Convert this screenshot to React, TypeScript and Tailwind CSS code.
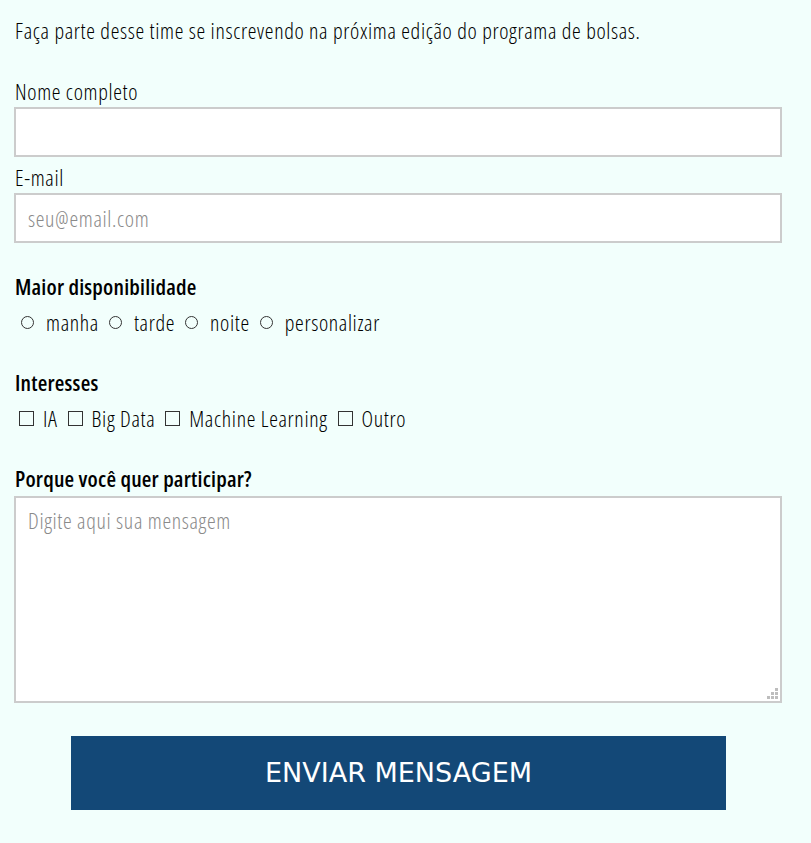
import React from "react";

const radios = ["manha", "tarde", "noite", "personalizar"];
const checks = ["IA", "Big Data", "Machine Learning", "Outro"];

export default function App() {
  return (
    <div
      className="min-h-[843px] w-full bg-[#f2fffc] px-[14px] pt-[14px] text-[22px] tracking-[0.65px] text-black font-light font-stretch-condensed"
      style={{ fontFamily: "'Open Sans', 'DejaVu Sans Condensed', sans-serif" }}
    >
      <p className="leading-[32px] pl-[1px]">
        Faça parte desse time se inscrevendo na próxima edição do programa de bolsas.
      </p>

      <form className="mt-[29px]" onSubmit={(e) => e.preventDefault()}>
        <label className="block leading-[32px] pl-[1px]">Nome completo</label>
        <input className="block h-[50px] w-[768px] border-2 border-[#cccccc] bg-white px-3 outline-none" />

        <label className="block mt-[4px] leading-[32px] pl-[1px]">E-mail</label>
        <input
          className="block h-[50px] w-[768px] border-2 border-[#cccccc] bg-white px-3 outline-none placeholder:text-[#8a8a8a]"
          placeholder="seu@email.com"
        />

        <div className="mt-[27px] font-semibold tracking-[0.2px] leading-[32px] pl-[1px]">Maior disponibilidade</div>
        <div className="flex items-center leading-[40px] pl-[7px]">
          {radios.map((r) => (
            <span key={r} className="mr-[10px] flex items-center">
              <span className="mr-[12px] inline-block h-[13px] w-[13px] shrink-0 rounded-full border border-[#333]" />
              {r}
            </span>
          ))}
        </div>

        <div className="mt-[24px] font-semibold tracking-[0.2px] leading-[32px] pl-[1px]">Interesses</div>
        <div className="flex items-center leading-[40px] pl-[5px]">
          {checks.map((c) => (
            <span key={c} className="mr-[10px] flex items-center">
              <span className="mr-[9px] inline-block h-[15px] w-[15px] shrink-0 border border-[#333]" />
              {c}
            </span>
          ))}
        </div>

        <div className="mt-[24px] font-semibold tracking-[0.2px] leading-[32px] pl-[1px]">Porque você quer participar?</div>
        <div className="relative mt-[2px] w-[768px]">
          <textarea
            className="block h-[207px] w-[768px] resize-none border-2 border-[#cccccc] bg-white px-3 py-[6px] outline-none placeholder:text-[#8a8a8a]"
            placeholder="Digite aqui sua mensagem"
          />
          {/* grip */}
          <div className="pointer-events-none absolute bottom-[4px] right-[4px] grid grid-cols-3 gap-[1px]">
            <span className="h-[3px] w-[3px]" />
            <span className="h-[3px] w-[3px]" />
            <span className="h-[3px] w-[3px] bg-[#bdbdbd]" />
            <span className="h-[3px] w-[3px]" />
            <span className="h-[3px] w-[3px] bg-[#bdbdbd]" />
            <span className="h-[3px] w-[3px] bg-[#bdbdbd]" />
            <span className="h-[3px] w-[3px] bg-[#bdbdbd]" />
            <span className="h-[3px] w-[3px] bg-[#bdbdbd]" />
            <span className="h-[3px] w-[3px] bg-[#bdbdbd]" />
          </div>
        </div>

        <button
          type="submit"
          className="ml-[57px] mt-[33px] block h-[74px] w-[655px] bg-[#134877] text-[27px] font-normal tracking-normal text-white"
          style={{ fontFamily: "'DejaVu Sans', sans-serif", fontStretch: "normal" }}
        >
          ENVIAR MENSAGEM
        </button>
      </form>
    </div>
  );
}
